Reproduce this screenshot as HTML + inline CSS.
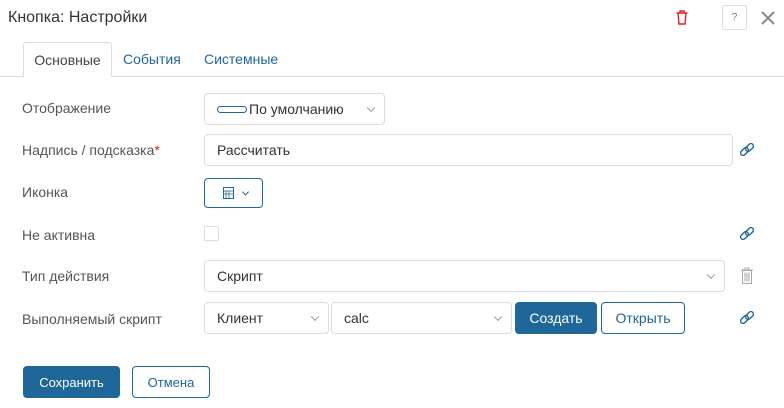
<!DOCTYPE html>
<html><head><meta charset="utf-8"><style>
*{box-sizing:border-box;margin:0;padding:0}
body{width:784px;height:408px;background:#fff;font-family:"Liberation Sans",sans-serif;position:relative;overflow:hidden;color:#333}
.a{position:absolute}
.lbl{position:absolute;left:22px;font-size:14px;color:#555}
.box{position:absolute;border:1px solid #dcdcdc;border-radius:4px;background:#fff;font-size:14px;color:#333;display:flex;align-items:center;padding-left:12px}
.chev{position:absolute;right:10px;top:50%;width:6px;height:6px;border-right:1px solid #999;border-bottom:1px solid #999;transform:translateY(-70%) rotate(45deg)}
.btn{position:absolute;border-radius:4px;font-size:14px;display:flex;align-items:center;justify-content:center}
.pri{background:#1f6699;color:#fff}
.sec{border:1px solid #1f6699;color:#1f6699;background:#fff}
</style></head><body>
<div class="a" style="left:8px;top:9px;font-size:16px;color:#333">Кнопка: Настройки</div>
<svg class="a" style="left:673px;top:8px" width="18" height="18" viewBox="0 0 18 18"><path d="M5 5h8l-1 11H6z M3.5 5h11 M7 5V3h4v2" fill="none" stroke="#e02020" stroke-width="1.4"/></svg>
<div class="a" style="left:722px;top:5px;width:25px;height:25px;border:1px solid #ddd;border-radius:2px;font-size:10px;color:#777;text-align:center;line-height:23px">?</div>
<svg class="a" style="left:760px;top:10px" width="16" height="16"><path d="M2 2L14 14M14 2L2 14" stroke="#888" stroke-width="2"/></svg>
<div class="a" style="left:0;top:76px;width:784px;height:1px;background:#ddd"></div>
<div class="a" style="left:23px;top:42px;width:89px;height:35px;border:1px solid #ddd;border-bottom:none;background:#fff;border-radius:3px 3px 0 0;font-size:14px;color:#444;text-align:center;line-height:34px">Основные</div>
<div class="a" style="left:123px;top:51px;font-size:14px;color:#1f6699">События</div>
<div class="a" style="left:204px;top:51px;font-size:14px;color:#1f6699">Системные</div>

<div class="lbl" style="top:100px">Отображение</div>
<div class="box" style="left:204px;top:93px;width:181px;height:32px"><span style="display:inline-block;width:30px;height:7px;border:1px solid #1f6699;border-radius:4px;margin-right:2px"></span>По умолчанию<span class="chev"></span></div>

<div class="lbl" style="top:142px">Надпись / подсказка<span style="color:#d22">*</span></div>
<div class="box" style="left:204px;top:134px;width:529px;height:32px">Рассчитать</div>

<div class="lbl" style="top:184px">Иконка</div>
<div class="box" style="left:204px;top:178px;width:59px;height:30px;border-color:#1f6699;padding-left:18px"><svg width="11" height="12"><rect x="0.5" y="0.5" width="10" height="11" fill="none" stroke="#1f6699"/><path d="M0 4h11M3 4v8M6 4v8M0 7h11" stroke="#1f6699" stroke-width="0.8"/></svg><span class="chev" style="right:14px;width:5px;height:5px;border-color:#1f6699"></span></div>

<div class="lbl" style="top:227px">Не активна</div>
<div class="a" style="left:204px;top:226px;width:15px;height:15px;border:1px solid #ddd;border-radius:2px"></div>

<div class="lbl" style="top:268px">Тип действия</div>
<div class="box" style="left:204px;top:260px;width:521px;height:32px">Скрипт<span class="chev"></span></div>
<svg class="a" style="left:740px;top:267px" width="14" height="18"><path d="M1 3h12M5 3V1h4v2M2.5 3.5h9v13h-9z M5 5.5v9M7 5.5v9M9 5.5v9" fill="none" stroke="#aaa" stroke-width="1"/></svg>

<div class="lbl" style="top:311px">Выполняемый скрипт</div>
<div class="box" style="left:204px;top:302px;width:125px;height:32px">Клиент<span class="chev"></span></div>
<div class="box" style="left:331px;top:302px;width:181px;height:32px">calc<span class="chev"></span></div>
<div class="btn pri" style="left:515px;top:302px;width:82px;height:32px">Создать</div>
<div class="btn sec" style="left:601px;top:302px;width:84px;height:32px">Открыть</div>

<svg class="a" style="left:738px;top:141px" width="18" height="18" viewBox="0 0 18 18"><g fill="none" stroke="#1f6699" stroke-width="1.4"><rect x="2" y="8" width="9" height="5" rx="2.5" transform="rotate(-45 6.5 10.5)"/><rect x="7" y="4" width="9" height="5" rx="2.5" transform="rotate(-45 11.5 6.5)"/></g></svg>
<svg class="a" style="left:738px;top:225px" width="18" height="18" viewBox="0 0 18 18"><g fill="none" stroke="#1f6699" stroke-width="1.4"><rect x="2" y="8" width="9" height="5" rx="2.5" transform="rotate(-45 6.5 10.5)"/><rect x="7" y="4" width="9" height="5" rx="2.5" transform="rotate(-45 11.5 6.5)"/></g></svg>
<svg class="a" style="left:738px;top:309px" width="18" height="18" viewBox="0 0 18 18"><g fill="none" stroke="#1f6699" stroke-width="1.4"><rect x="2" y="8" width="9" height="5" rx="2.5" transform="rotate(-45 6.5 10.5)"/><rect x="7" y="4" width="9" height="5" rx="2.5" transform="rotate(-45 11.5 6.5)"/></g></svg>

<div class="btn pri" style="left:23px;top:366px;width:97px;height:32px;font-size:13px">Сохранить</div>
<div class="btn sec" style="left:132px;top:366px;width:78px;height:32px;font-size:13px">Отмена</div>
</body></html>
